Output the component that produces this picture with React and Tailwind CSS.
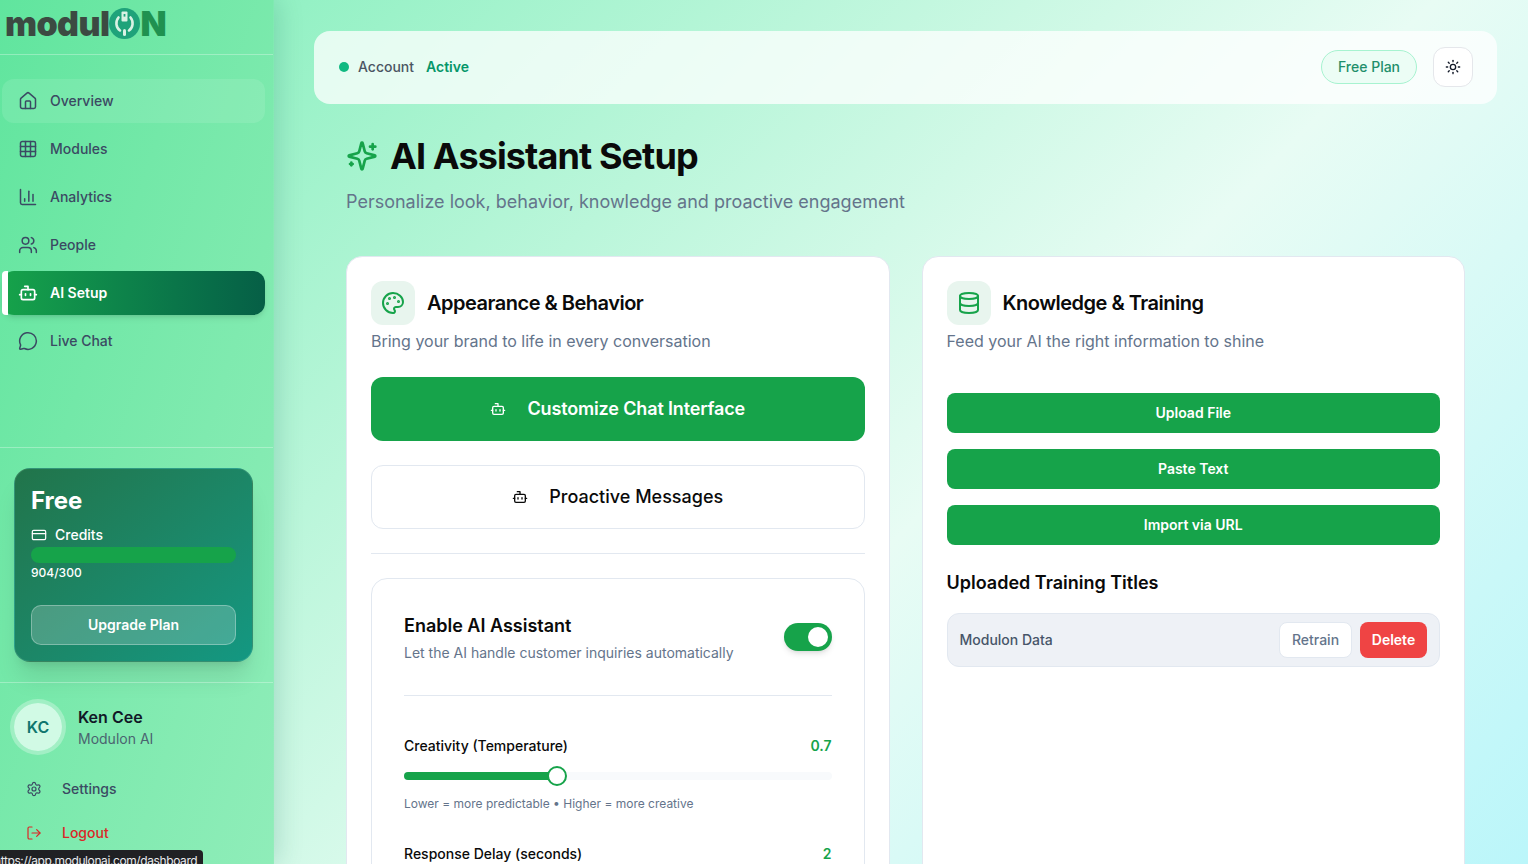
import React from "react";
import { House, Grid3x3, ChartColumn, Users, Bot, MessageCircle, Palette, Database, Sun, CreditCard, Settings, LogOut } from "lucide-react";

const nav = [
  { label: "Overview", Icon: House, hover: true },
  { label: "Modules", Icon: Grid3x3 },
  { label: "Analytics", Icon: ChartColumn },
  { label: "People", Icon: Users },
  { label: "AI Setup", Icon: Bot, active: true },
  { label: "Live Chat", Icon: MessageCircle },
];

function SparkleIcon() {
  return (
    <svg width="32" height="32" viewBox="0 0 24 24" fill="none" stroke="#16a34a" strokeWidth="2" strokeLinecap="round" strokeLinejoin="round" className="shrink-0">
      <path d="M9.937 15.5A2 2 0 0 0 8.5 14.063l-6.135-1.582a.5.5 0 0 1 0-.962L8.5 9.936A2 2 0 0 0 9.937 8.5l1.582-6.135a.5.5 0 0 1 .963 0L14.063 8.5A2 2 0 0 0 15.5 9.937l6.135 1.581a.5.5 0 0 1 0 .964L15.5 14.063a2 2 0 0 0-1.437 1.437l-1.582 6.135a.5.5 0 0 1-.963 0z" />
      <path d="M20 3v4" />
      <path d="M22 5h-4" />
      <path d="M4 17v2" />
      <path d="M5 18H3" />
    </svg>
  );
}

function NavItem({ label, Icon, hover, active }) {
  if (active) {
    return (
      <div className="relative flex h-11 items-center gap-[12px] rounded-xl bg-gradient-to-r from-[#16a34a] to-[#065f46] pl-[16px] text-sm font-semibold text-white shadow-md">
        <span className="absolute top-0 left-0 h-11 w-[6px] rounded-l-sm bg-white" />
        <Icon size={20} strokeWidth={2} />
        <span>{label}</span>
      </div>
    );
  }
  return (
    <div className={`flex h-11 items-center gap-[12px] rounded-xl pl-[16px] text-sm font-medium text-[#3b4a63] ${hover ? "bg-white/10" : ""}`}>
      <Icon size={20} strokeWidth={1.8} />
      <span>{label}</span>
    </div>
  );
}

function Logo() {
  return (
    <div className="flex items-center pl-[5px] leading-none select-none">
      <span className="text-[34px] leading-none font-black tracking-[-0.6px] text-[#3c4a42]">modul</span>
      <svg width="31" height="31" viewBox="0 0 31 31" className="shrink-0">
        <circle cx="15.5" cy="15.5" r="15.5" fill="#1fa37a" />
        <path d="M9.5 9.5a9 9 0 0 0 1.5 13" fill="none" stroke="#d9f2e4" strokeWidth="2.6" strokeLinecap="round" />
        <path d="M21.5 9.5a9 9 0 0 1-1.5 13" fill="none" stroke="#d9f2e4" strokeWidth="2.6" strokeLinecap="round" />
        <rect x="12.5" y="3.5" width="6" height="10" rx="1" fill="#d9f2e4" />
        <rect x="14.6" y="6" width="1.8" height="2.6" fill="#1fa37a" />
        <rect x="14" y="21" width="3" height="7" rx="1.5" fill="#d9f2e4" />
      </svg>
      <span className="text-[34px] leading-none font-black text-[#1f9150]">N</span>
    </div>
  );
}

function Sidebar() {
  return (
    <aside className="z-10 flex h-full w-[274px] shrink-0 flex-col border-r border-white/20 bg-gradient-to-br from-[#60e59e] to-[#8fedb9] shadow-[4px_0_24px_rgba(6,95,70,0.18)]">
      <div className="flex h-[55px] shrink-0 items-center border-b border-white/30 pb-[7px]">
        <Logo />
      </div>
      <nav className="flex flex-1 flex-col gap-1 pt-6 pr-2 pl-[2px]">
        {nav.map((n) => (
          <NavItem key={n.label} {...n} />
        ))}
      </nav>
      <div className="shrink-0 border-t border-white/30 px-[14px] pt-5 pb-5">
        <div className="mr-[6px] h-[194px] rounded-2xl border border-white/10 bg-gradient-to-br from-[#21744a] to-[#139882] px-4 pt-4 text-white shadow-xl">
          <div className="text-2xl leading-8 font-bold">Free</div>
          <div className="mt-[8px] flex items-center gap-2 text-sm leading-5 font-medium">
            <CreditCard size={16} strokeWidth={1.8} />
            <span>Credits</span>
          </div>
          <div className="mt-[2px] h-4 rounded-full bg-[#16a34a]" />
          <div className="text-xs leading-5 font-medium">904/300</div>
          <div className="mt-[22px] flex h-10 items-center justify-center rounded-[10px] border border-white/30 bg-white/20 text-sm font-semibold">Upgrade Plan</div>
        </div>
      </div>
      <div className="h-[182px] shrink-0 border-t border-white/30">
        <div className="flex items-center gap-3 pt-4 pl-[10px]">
          <div className="flex h-14 w-14 items-center justify-center rounded-full border-4 border-white/30 bg-[#d1fae5] bg-clip-padding text-base font-semibold text-[#0f766e]">KC</div>
          <div>
            <div className="text-base leading-6 font-semibold text-[#111827]">Ken Cee</div>
            <div className="text-sm leading-5 text-[#4b6470]">Modulon AI</div>
          </div>
        </div>
        <div className="mt-3 flex h-11 items-center gap-[20px] pl-[26px] text-sm font-medium text-[#3b4a63]">
          <Settings size={16} strokeWidth={1.8} />
          <span>Settings</span>
        </div>
        <div className="flex h-11 items-center gap-[20px] pl-[26px] text-sm font-medium text-[#dc2626]">
          <LogOut size={16} strokeWidth={1.8} />
          <span>Logout</span>
        </div>
      </div>
    </aside>
  );
}

function Header() {
  return (
    <header className="flex h-[73px] items-center rounded-2xl bg-white/75 pr-6 pb-[1px] pl-[25px]">
      <span className="h-[10px] w-[10px] rounded-full bg-[#10b981]" />
      <span className="ml-[9px] text-sm font-medium text-[#4b5563]">Account</span>
      <span className="ml-3 text-sm font-semibold text-[#059669]">Active</span>
      <div className="ml-auto flex h-[34px] w-24 items-center justify-center rounded-full border border-[#a7f3d0] bg-[#ecfdf5] text-sm font-medium text-[#1f8f6b]">Free Plan</div>
      <div className="ml-4 flex h-10 w-10 items-center justify-center rounded-xl border border-gray-200 bg-white text-[#111827]">
        <Sun size={16} strokeWidth={2} />
      </div>
    </header>
  );
}

function CardHead({ Icon, title, sub }) {
  return (
    <>
      <div className="flex items-center gap-3">
        <div className="flex h-11 w-11 items-center justify-center rounded-xl bg-[#e8f5ee] text-[#16a34a]">
          <Icon size={24} strokeWidth={2} />
        </div>
        <h2 className="text-xl font-semibold tracking-[-0.5px] text-[#0a0a0a]">{title}</h2>
      </div>
      <p className="mt-[4px] text-base leading-6 text-[#64748b]">{sub}</p>
    </>
  );
}

function LeftCard() {
  return (
    <section className="h-[760px] rounded-2xl border border-[#e2e8f0] bg-white p-6">
      <CardHead Icon={Palette} title="Appearance & Behavior" sub="Bring your brand to life in every conversation" />
      <div className="mt-6 flex h-16 items-center justify-center gap-[21px] rounded-xl bg-[#16a34a] text-lg font-semibold tracking-[-0.15px] text-white">
        <Bot size={16} strokeWidth={2} />
        <span>Customize Chat Interface</span>
      </div>
      <div className="mt-6 flex h-16 items-center justify-center gap-[21px] rounded-xl border border-[#e2e8f0] bg-white text-lg font-medium text-[#0a0a0a]">
        <Bot size={16} strokeWidth={2} />
        <span>Proactive Messages</span>
      </div>
      <div className="mt-6 border-t border-[#e2e8f0]" />
      <div className="mt-6 rounded-2xl border border-[#e2e8f0] px-8 pt-[33px] pb-8">
        <div className="flex items-start justify-between border-b border-[#e2e8f0] pb-8">
          <div>
            <div className="text-lg leading-7 font-semibold text-[#0a0a0a]">Enable AI Assistant</div>
            <div className="mt-[3px] text-sm leading-5 text-[#64748b]">Let the AI handle customer inquiries automatically</div>
          </div>
          <div className="mt-[11px] flex h-7 w-12 items-center justify-end rounded-full bg-[#16a34a] pr-1 shadow-md">
            <span className="h-5 w-5 rounded-full bg-white" />
          </div>
        </div>
        <div className="mt-10 flex items-center justify-between text-sm leading-5">
          <span className="font-medium text-[#0a0a0a]">Creativity (Temperature)</span>
          <span className="font-semibold text-[#16a34a]">0.7</span>
        </div>
        <div className="relative mt-4 h-2 rounded-full bg-[#f8fafc]">
          <div className="h-2 w-[153px] rounded-full bg-[#16a34a]" />
          <span className="absolute top-[-6px] left-[143px] h-5 w-5 rounded-full border-2 border-[#16a34a] bg-white" />
        </div>
        <div className="mt-4 text-xs leading-4 text-[#64748b]">Lower = more predictable • Higher = more creative</div>
        <div className="mt-8 flex items-center justify-between text-sm leading-5">
          <span className="font-medium text-[#0a0a0a]">Response Delay (seconds)</span>
          <span className="font-semibold text-[#16a34a]">2</span>
        </div>
      </div>
    </section>
  );
}

function GreenButton({ children }) {
  return <div className="flex h-10 items-center justify-center rounded-lg bg-[#16a34a] text-sm font-semibold text-white">{children}</div>;
}

function RightCard() {
  return (
    <section className="h-[760px] rounded-2xl border border-[#e2e8f0] bg-white p-6">
      <CardHead Icon={Database} title="Knowledge & Training" sub="Feed your AI the right information to shine" />
      <div className="mt-10 flex flex-col gap-4">
        <GreenButton>Upload File</GreenButton>
        <GreenButton>Paste Text</GreenButton>
        <GreenButton>Import via URL</GreenButton>
      </div>
      <h3 className="mt-6 text-lg leading-7 font-semibold text-[#0a0a0a]">Uploaded Training Titles</h3>
      <div className="mt-4 flex h-[54px] items-center rounded-xl border border-[#e2e8f0] bg-[#eef1f6] pr-3 pl-3">
        <span className="text-sm font-medium text-[#475569]">Modulon Data</span>
        <div className="ml-auto flex h-9 w-[73px] items-center justify-center rounded-lg border border-[#e2e8f0] bg-white text-sm font-medium text-[#64748b]">Retrain</div>
        <div className="ml-2 flex h-9 w-[67px] items-center justify-center rounded-lg bg-[#ef4444] text-sm font-semibold text-white">Delete</div>
      </div>
    </section>
  );
}

export default function App() {
  return (
    <div className="relative flex h-screen w-full overflow-hidden bg-[linear-gradient(135deg,#7eeeb8_0%,#e8fcf4_60%,#bbf6fa_100%)] font-['Inter',sans-serif]">
      <Sidebar />
      <main className="min-w-0 flex-1 overflow-hidden pt-[31px] pr-[31px] pl-10">
        <Header />
        <div className="px-8">
          <div className="mt-[30px] flex h-[44px] items-center gap-[12px]">
            <SparkleIcon />
            <h1 className="text-4xl font-bold tracking-[-0.9px] text-[#0a0a0a]">AI Assistant Setup</h1>
          </div>
          <p className="mt-[10px] text-lg leading-7 text-[#64748b]">Personalize look, behavior, knowledge and proactive engagement</p>
          <div className="mt-10 grid grid-cols-2 gap-8">
            <LeftCard />
            <RightCard />
          </div>
        </div>
      </main>
      <div className="absolute bottom-0 left-0 z-20 h-[14px] w-[203px] overflow-hidden rounded-tr bg-[#202124] text-xs leading-[22px] tracking-[-0.4px] whitespace-nowrap text-[#e8eaed]">
        <span className="ml-[-6px]">https://app.modulonai.com/dashboard</span>
      </div>
    </div>
  );
}
